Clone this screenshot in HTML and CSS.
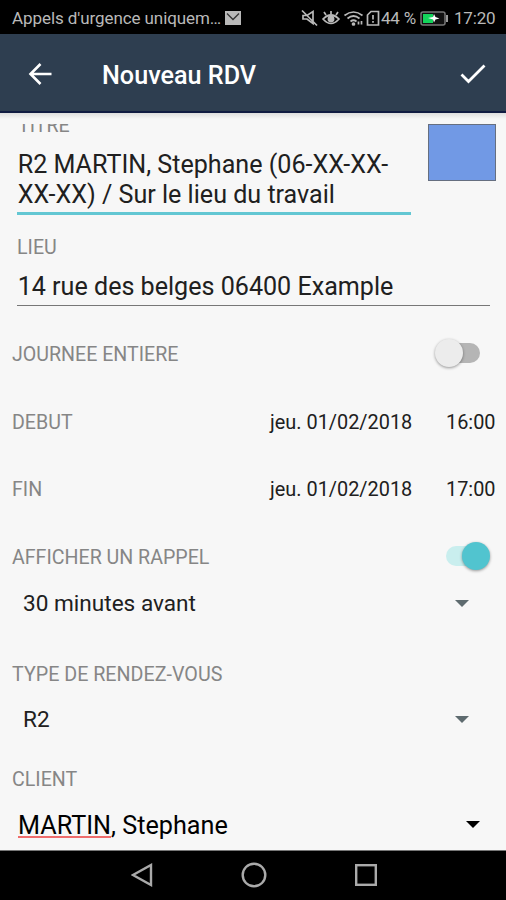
FILE: index.html
```html
<!DOCTYPE html>
<html lang="fr">
<head>
<meta charset="utf-8">
<title>Nouveau RDV</title>
<link rel="stylesheet" href="styles.css">
</head>
<body>
<div class="phone">
  <div class="status">
    <span class="carrier">Appels d'urgence uniquem…</span>
    <svg class="mail" width="16" height="14" viewBox="0 0 16 14"><rect width="16" height="14" fill="#b9b9b9"/><path d="M2 2.500 8 8.500l6-6" fill="none" stroke="#333" stroke-width="1.300"/></svg>
    <svg class="icons" width="80" height="18" viewBox="0 0 80 18" fill="none" stroke="#b9b9b9" stroke-width="1.700">
      <path d="M2 6.500h4l6-4v12l-6-4.500H2zM1 1.500 16 16.500"/>
      <path d="M22 10q8-8 16 0-8 9-16 0zM30 5V2M25 6l-2-3M35 6l2-3"/><circle cx="30" cy="10" r="2.600" fill="#b9b9b9"/>
      <path d="M43.500 6.500q9-7 18 0M46.500 9.500q6-5 12 0M49.500 12.500q3-2.500 6 0"/><circle cx="52.500" cy="15" r="1" fill="#b9b9b9"/><path d="M57.500 15.500v-3M60.500 12v3.500"/>
      <path d="M70 2.500h7.500v13.500H66.500V6zM72 6v4.500M72 12v1.800"/>
    </svg>
    <span class="percent">44 %</span>
    <svg class="battery" width="29" height="15" viewBox="0 0 29 15"><rect x="1" y="1" width="24" height="13" rx="2" fill="#111" stroke="#777" stroke-width="1.500"/><path d="M3 3h10v9H3z" fill="#14d45b"/><path d="M8 7l5-1 1-3 1.500 3 4 1.500-4 1-1.500 3-1-3z" fill="#fff"/><path d="M27 4v7" stroke="#999" stroke-width="2"/></svg>
    <span class="clock">17:20</span>
  </div>
  <header class="appbar">
    <svg width="24" height="24" viewBox="0 0 24 24" fill="none" stroke="#fff" stroke-width="2.600"><path d="M23.500 12H3M12.500 2 2.500 12l10 10"/></svg>
    <h1>Nouveau RDV</h1>
    <svg width="26" height="20" viewBox="0 0 26 20" fill="none" stroke="#fff" stroke-width="2.800"><path d="M1.500 10.500l7 7L24.500 1.500"/></svg>
  </header>
  <main class="view">
    <div class="form">
      <section class="title">
        <div class="title-field">
          <div class="label clipped">TITRE</div>
          <div class="text">R2 MARTIN, Stephane (06-XX-XX-<br>XX-XX) / Sur le lieu du travail</div>
        </div>
        <div class="swatch"></div>
      </section>
      <section class="place">
        <div class="label">LIEU</div>
        <div class="text">14 rue des belges 06400 Example</div>
      </section>
      <div class="row"><span class="label">JOURNEE ENTIERE</span><span class="switch off"><i></i></span></div>
      <div class="row"><span class="label">DEBUT</span><span class="date">jeu. 01/02/2018</span><span class="time">16:00</span></div>
      <div class="row"><span class="label">FIN</span><span class="date">jeu. 01/02/2018</span><span class="time">17:00</span></div>
      <div class="row"><span class="label">AFFICHER UN RAPPEL</span><span class="switch on"><i></i></span></div>
      <div class="select first"><span>30 minutes avant</span><b></b></div>
      <div class="label l-type">TYPE DE RENDEZ-VOUS</div>
      <div class="select"><span>R2</span><b></b></div>
      <div class="label l-client">CLIENT</div>
      <div class="client"><span><u>MARTIN</u>, Stephane</span><b></b></div>
    </div>
  </main>
  <nav class="nav">
    <svg width="22" height="24" viewBox="0 0 22 24"><path d="M20 2v20L2 12z"/></svg>
    <svg width="26" height="26" viewBox="0 0 26 26"><circle cx="13" cy="13" r="11.300"/></svg>
    <svg width="22" height="22" viewBox="0 0 22 22"><rect x="1.200" y="1.200" width="19.600" height="19.600"/></svg>
  </nav>
</div>
</body>
</html>
```
FILE: styles.css
```css
* { box-sizing: border-box; }
body { margin: 0; font-family: Roboto, "Liberation Sans", sans-serif; }
.phone { width: 506px; height: 900px; display: flex; flex-direction: column; overflow: hidden; background: #f7f7f7; }
.status { height: 34px; background: #000; color: #b9b9b9; display: flex; align-items: center; padding: 2px 10px 0 12px; font-size: 17px; white-space: nowrap; }
.carrier { width: 213px; letter-spacing: -0.08px; }
.mail { margin-right: 60px; }
.icons { margin-right: 0; }
.percent { width: 39px; letter-spacing: -0.2px; }
.battery { margin-right: 5px; }
.clock { letter-spacing: -0.2px; }
.appbar { height: 79px; background: #2e3e50; border-bottom: 2px solid #111c42; display: flex; align-items: center; padding: 3px 20px 0 28px; color: #fff; }
.appbar h1 { flex: 1; margin: 0 0 0 50px; padding-top: 3px; font-size: 25.200px; font-weight: 500; line-height: 30px; }
.view { height: 737px; padding-top: 11px; background: linear-gradient(#dedede, #f7f7f7 6px); }
.form { height: 726px; overflow: hidden; }
.label { color: #868686; font-size: 19.600px; line-height: 24px; white-space: nowrap; }
.text { color: #202020; font-size: 25.100px; line-height: 30px; white-space: nowrap; padding-left: 0.700px; }
.title { display: flex; justify-content: space-between; padding: 0 10px 0 17px; }
.title-field { width: 394px; height: 91px; border-bottom: 3px solid #63c7d3; }
.clipped { margin-top: -10px; padding-left: 1px; }
.title .text { padding-top: 12px; }
.swatch { width: 68px; height: 57px; background: #7199e5; border: 1px solid #666f80; }
.place { margin: 0 16px 15px 17px; padding-top: 21px; height: 91px; border-bottom: 1px solid #777; }
.place .text { padding-top: 12px; }
.row { height: 67.500px; padding: 0 10px 0 12px; display: flex; align-items: center; }
.row .label { flex: 1; padding-top: 1px; }
.date { width: 176px; }
.time { width: 50px; }
.date, .time { color: #202020; font-size: 19.900px; line-height: 24px; padding-top: 1px; white-space: nowrap; }
.switch { display: flex; align-items: center; height: 20px; width: 34px; border-radius: 10px; margin: 0 16px 3px 0; }
.switch i { width: 28px; height: 28px; flex: none; border-radius: 50%; box-shadow: 0 1px 3px #0006; }
.off { background: #b5b5b5; }
.off i { background: #ececec; margin-left: -11px; }
.on { background: #c9eeee; margin-right: 15px; width: 35px; }
.on i { background: #51c4cf; margin-left: 16px; }
.select, .client { display: flex; align-items: center; justify-content: space-between; height: 30px; padding: 0 37px 0 23px; color: #202020; font-size: 22.600px; line-height: 30px; }
.select b { border: solid transparent; border-width: 7px 7px 0; border-top-color: #5e6b6f; margin-bottom: 1px; }
.first { margin-top: -2px; }
.l-type { margin: 44px 12px 18px; font-size: 19.700px; }
.l-client { margin: 33px 12px 18px; }
.client { padding: 0 26px 0 18px; font-size: 25.200px; color: #000; }
.client span { padding-top: 2px; }
.client b { margin-bottom: 1px; border: solid transparent; border-width: 7px 7px 0; border-top-color: #000; }
.client u { text-decoration: underline; text-decoration-color: #ef6c6c; text-decoration-thickness: 2px; text-underline-offset: 2px; text-decoration-skip-ink: none; }
.nav { height: 50px; background: #000; border-top: 1px solid #777; display: flex; align-items: center; justify-content: center; gap: 88px; padding: 0 0 1px 1px; }
.nav svg { fill: none; stroke: #aaa; stroke-width: 2.400; }
```
